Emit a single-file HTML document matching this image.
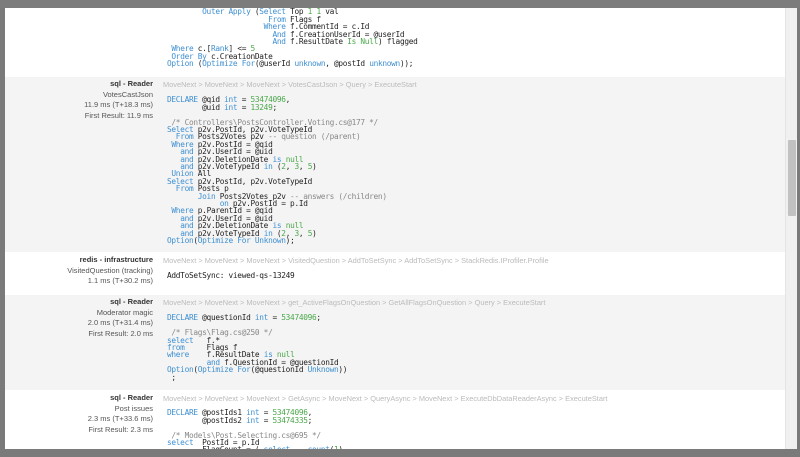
<!DOCTYPE html>
<html><head><meta charset="utf-8"><style>
*{margin:0;padding:0;box-sizing:border-box}
body{width:800px;height:457px;overflow:hidden;background:#7a7a7a;font-family:"Liberation Sans",sans-serif;position:relative}
.hdr{position:absolute;left:0;top:0;width:800px;height:8px;background:#7c7c7c}
.modal{position:absolute;left:5px;top:8px;width:792px;height:441px;background:#fff;overflow:hidden}
.sb{position:absolute;right:0;top:0;width:12px;height:441px;background:#f0f0f0;border-left:1px solid #e4e4e4}
.thumb{position:absolute;left:2px;top:132px;width:8px;height:76px;background:#c1c1c1;border-radius:1px}
.sec{position:absolute;left:0;width:780px}
.g{background:#f4f4f4}
pre{position:absolute;font-family:"DejaVu Sans Mono","Liberation Mono",monospace;font-size:7.8px;letter-spacing:-0.3px;line-height:7.4px;color:#222;white-space:pre}
.k{color:#3d8fd1}.n{color:#4aa84a}.c{color:#888}
.lab{position:absolute;right:632px;text-align:right;font-size:7.5px;line-height:10.5px;color:#555;white-space:nowrap}
.lab b{color:#333}
.bc{position:absolute;left:158px;font-size:7.4px;color:#bbb;white-space:nowrap}
.bot{position:absolute;left:0;top:449px;width:800px;height:8px;background:#7a7a7a}
</style></head><body>
<div class="hdr"></div>
<div class="modal">
<div class="sec" style="top:0;height:69px">
<pre style="left:162px;top:0.3px">        <span class="k">Outer Apply</span> (<span class="k">Select</span> Top <span class="n">1</span> <span class="n">1</span> val
                       <span class="k">From</span> Flags f
                      <span class="k">Where</span> f.CommentId = c.Id
                        <span class="k">And</span> f.CreationUserId = @userId
                        <span class="k">And</span> f.ResultDate <span class="n">Is</span> <span class="n">Null</span>) flagged
 <span class="k">Where</span> c.[<span class="k">Rank</span>] &lt;= <span class="n">5</span>
 <span class="k">Order By</span> c.CreationDate
<span class="k">Option</span> (<span class="k">Optimize For</span>(@userId <span class="k">unknown</span>, @postId <span class="k">unknown</span>));</pre>
</div>
<div class="sec g" style="top:69px;height:175px">
<div class="lab" style="top:2px"><b>sql - Reader</b><br>VotesCastJson<br>11.9 ms (T+18.3 ms)<br>First Result: 11.9 ms</div>
<div class="bc" style="top:3px">MoveNext &gt; MoveNext &gt; MoveNext &gt; VotesCastJson &gt; Query &gt; ExecuteStart</div>
<pre style="left:162px;top:19.3px"><span class="k">DECLARE</span> @qid <span class="k">int</span> = <span class="n">53474096</span>,
        @uid <span class="k">int</span> = <span class="n">13249</span>;

 <span class="c">/* Controllers\PostsController.Voting.cs@177 */</span>
<span class="k">Select</span> p2v.PostId, p2v.VoteTypeId
  <span class="k">From</span> Posts2Votes p2v <span class="c">-- question (/parent)</span>
 <span class="k">Where</span> p2v.PostId = @qid
   <span class="k">and</span> p2v.UserId = @uid
   <span class="k">and</span> p2v.DeletionDate <span class="k">is</span> <span class="n">null</span>
   <span class="k">and</span> p2v.VoteTypeId <span class="k">in</span> (<span class="n">2</span>, <span class="n">3</span>, <span class="n">5</span>)
 <span class="k">Union</span> All
<span class="k">Select</span> p2v.PostId, p2v.VoteTypeId
  <span class="k">From</span> Posts p
       <span class="k">Join</span> Posts2Votes p2v <span class="c">-- answers (/children)</span>
            <span class="k">on</span> p2v.PostId = p.Id
 <span class="k">Where</span> p.ParentId = @qid
   <span class="k">and</span> p2v.UserId = @uid
   <span class="k">and</span> p2v.DeletionDate <span class="k">is</span> <span class="n">null</span>
   <span class="k">and</span> p2v.VoteTypeId <span class="k">in</span> (<span class="n">2</span>, <span class="n">3</span>, <span class="n">5</span>)
<span class="k">Option</span>(<span class="k">Optimize For Unknown</span>);</pre>
</div>
<div class="sec" style="top:244px;height:43px">
<div class="lab" style="top:3px"><b>redis - infrastructure</b><br>VisitedQuestion (tracking)<br>1.1 ms (T+30.2 ms)</div>
<div class="bc" style="top:4px">MoveNext &gt; MoveNext &gt; MoveNext &gt; VisitedQuestion &gt; AddToSetSync &gt; AddToSetSync &gt; StackRedis.IProfiler.Profile</div>
<pre style="left:162px;top:20.3px">AddToSetSync: viewed-qs-13249</pre>
</div>
<div class="sec g" style="top:287px;height:95px">
<div class="lab" style="top:2px"><b>sql - Reader</b><br>Moderator magic<br>2.0 ms (T+31.4 ms)<br>First Result: 2.0 ms</div>
<div class="bc" style="top:3px">MoveNext &gt; MoveNext &gt; MoveNext &gt; get_ActiveFlagsOnQuestion &gt; GetAllFlagsOnQuestion &gt; Query &gt; ExecuteStart</div>
<pre style="left:162px;top:19.3px"><span class="k">DECLARE</span> @questionId <span class="k">int</span> = <span class="n">53474096</span>;

 <span class="c">/* Flags\Flag.cs@250 */</span>
<span class="k">select</span>   f.*
<span class="k">from</span>     Flags f
<span class="k">where</span>    f.ResultDate <span class="k">is</span> <span class="n">null</span>
         <span class="k">and</span> f.QuestionId = @questionId
<span class="k">Option</span>(<span class="k">Optimize For</span>(@questionId <span class="k">Unknown</span>))
 ;</pre>
</div>
<div class="sec" style="top:382px;height:70px">
<div class="lab" style="top:3px"><b>sql - Reader</b><br>Post issues<br>2.3 ms (T+33.6 ms)<br>First Result: 2.3 ms</div>
<div class="bc" style="top:4px">MoveNext &gt; MoveNext &gt; MoveNext &gt; GetAsync &gt; MoveNext &gt; QueryAsync &gt; MoveNext &gt; ExecuteDbDataReaderAsync &gt; ExecuteStart</div>
<pre style="left:162px;top:19.3px"><span class="k">DECLARE</span> @postIds1 <span class="k">int</span> = <span class="n">53474096</span>,
        @postIds2 <span class="k">int</span> = <span class="n">53474335</span>;

 <span class="c">/* Models\Post.Selecting.cs@695 */</span>
<span class="k">select</span>  PostId = p.Id
        FlagCount = ( <span class="k">select</span>    <span class="k">count</span>(<span class="n">1</span>)</pre>
</div>
<div class="sb"><div class="thumb"></div></div>
</div>
<div class="bot"></div>
</body></html>
